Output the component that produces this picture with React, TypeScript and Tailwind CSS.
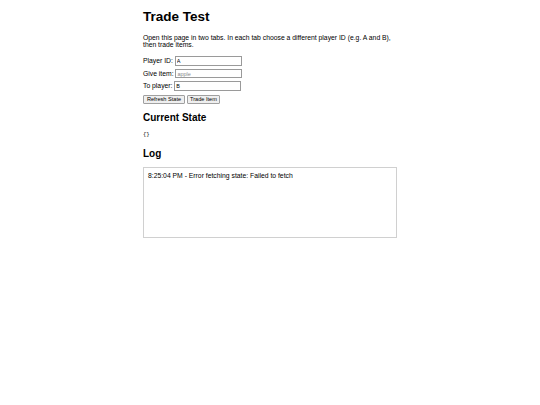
export default function App() {
  return (
    <div className="min-h-[405px] bg-white font-['Liberation_Sans',Arial,sans-serif] text-black">
      <div className="mx-auto flex w-[254px] flex-col pt-[9px]">
        <h1 className="text-[13.5px] font-bold leading-[15.5px]">Trade Test</h1>
        <p className="mt-[9px] text-[6.8px] leading-[7.7px]">
          Open this page in two tabs. In each tab choose a different player ID (e.g. A and B), then trade items.
        </p>

        <div className="mt-[7.5px] flex flex-col gap-[3px] text-[6.8px] leading-[7.7px]">
          <label className="flex h-[9.5px] items-center gap-[1.8px]">
            Player ID:
            <input
              defaultValue="A"
              className="h-[9.5px] w-[67px] border-[0.8px] border-[#9a9a9a] px-[1px] text-[5.5px] outline-none"
            />
          </label>
          <label className="flex h-[9.5px] items-center gap-[1.8px]">
            Give item:
            <input
              placeholder="apple"
              className="h-[9.5px] w-[67px] border-[0.8px] border-[#9a9a9a] px-[1px] text-[5.5px] outline-none placeholder:text-[#8a8a8a]"
            />
          </label>
          <label className="flex h-[9.5px] items-center gap-[1.8px]">
            To player:
            <input
              defaultValue="B"
              className="h-[9.5px] w-[67px] border-[0.8px] border-[#9a9a9a] px-[1px] text-[5.5px] outline-none"
            />
          </label>
          <div className="mt-[1.5px] flex gap-[1.7px]">
            <button className="flex h-[8.7px] w-[42px] items-center justify-center rounded-[1px] border-[0.8px] border-[#a0a0a0] bg-[#efefef] text-[5.6px] leading-none">
              Refresh State
            </button>
            <button className="flex h-[8.7px] w-[33.5px] items-center justify-center rounded-[1px] border-[0.8px] border-[#a0a0a0] bg-[#efefef] text-[5.6px] leading-none">
              Trade Item
            </button>
          </div>
        </div>

        <h2 className="mt-[8px] text-[10px] font-bold leading-[11.5px]">Current State</h2>
        <pre className="mt-[8.5px] font-['Liberation_Mono',monospace] text-[5.5px] leading-[6.3px]">{"{}"}</pre>

        <h2 className="mt-[10px] text-[10px] font-bold leading-[11.5px]">Log</h2>
        <div className="mt-[7.5px] h-[71px] border-[0.8px] border-[#d0d0d0] p-[4px] text-[6.8px] leading-[7.7px]">
          <div>8:25:04 PM - Error fetching state: Failed to fetch</div>
        </div>
      </div>
    </div>
  );
}
